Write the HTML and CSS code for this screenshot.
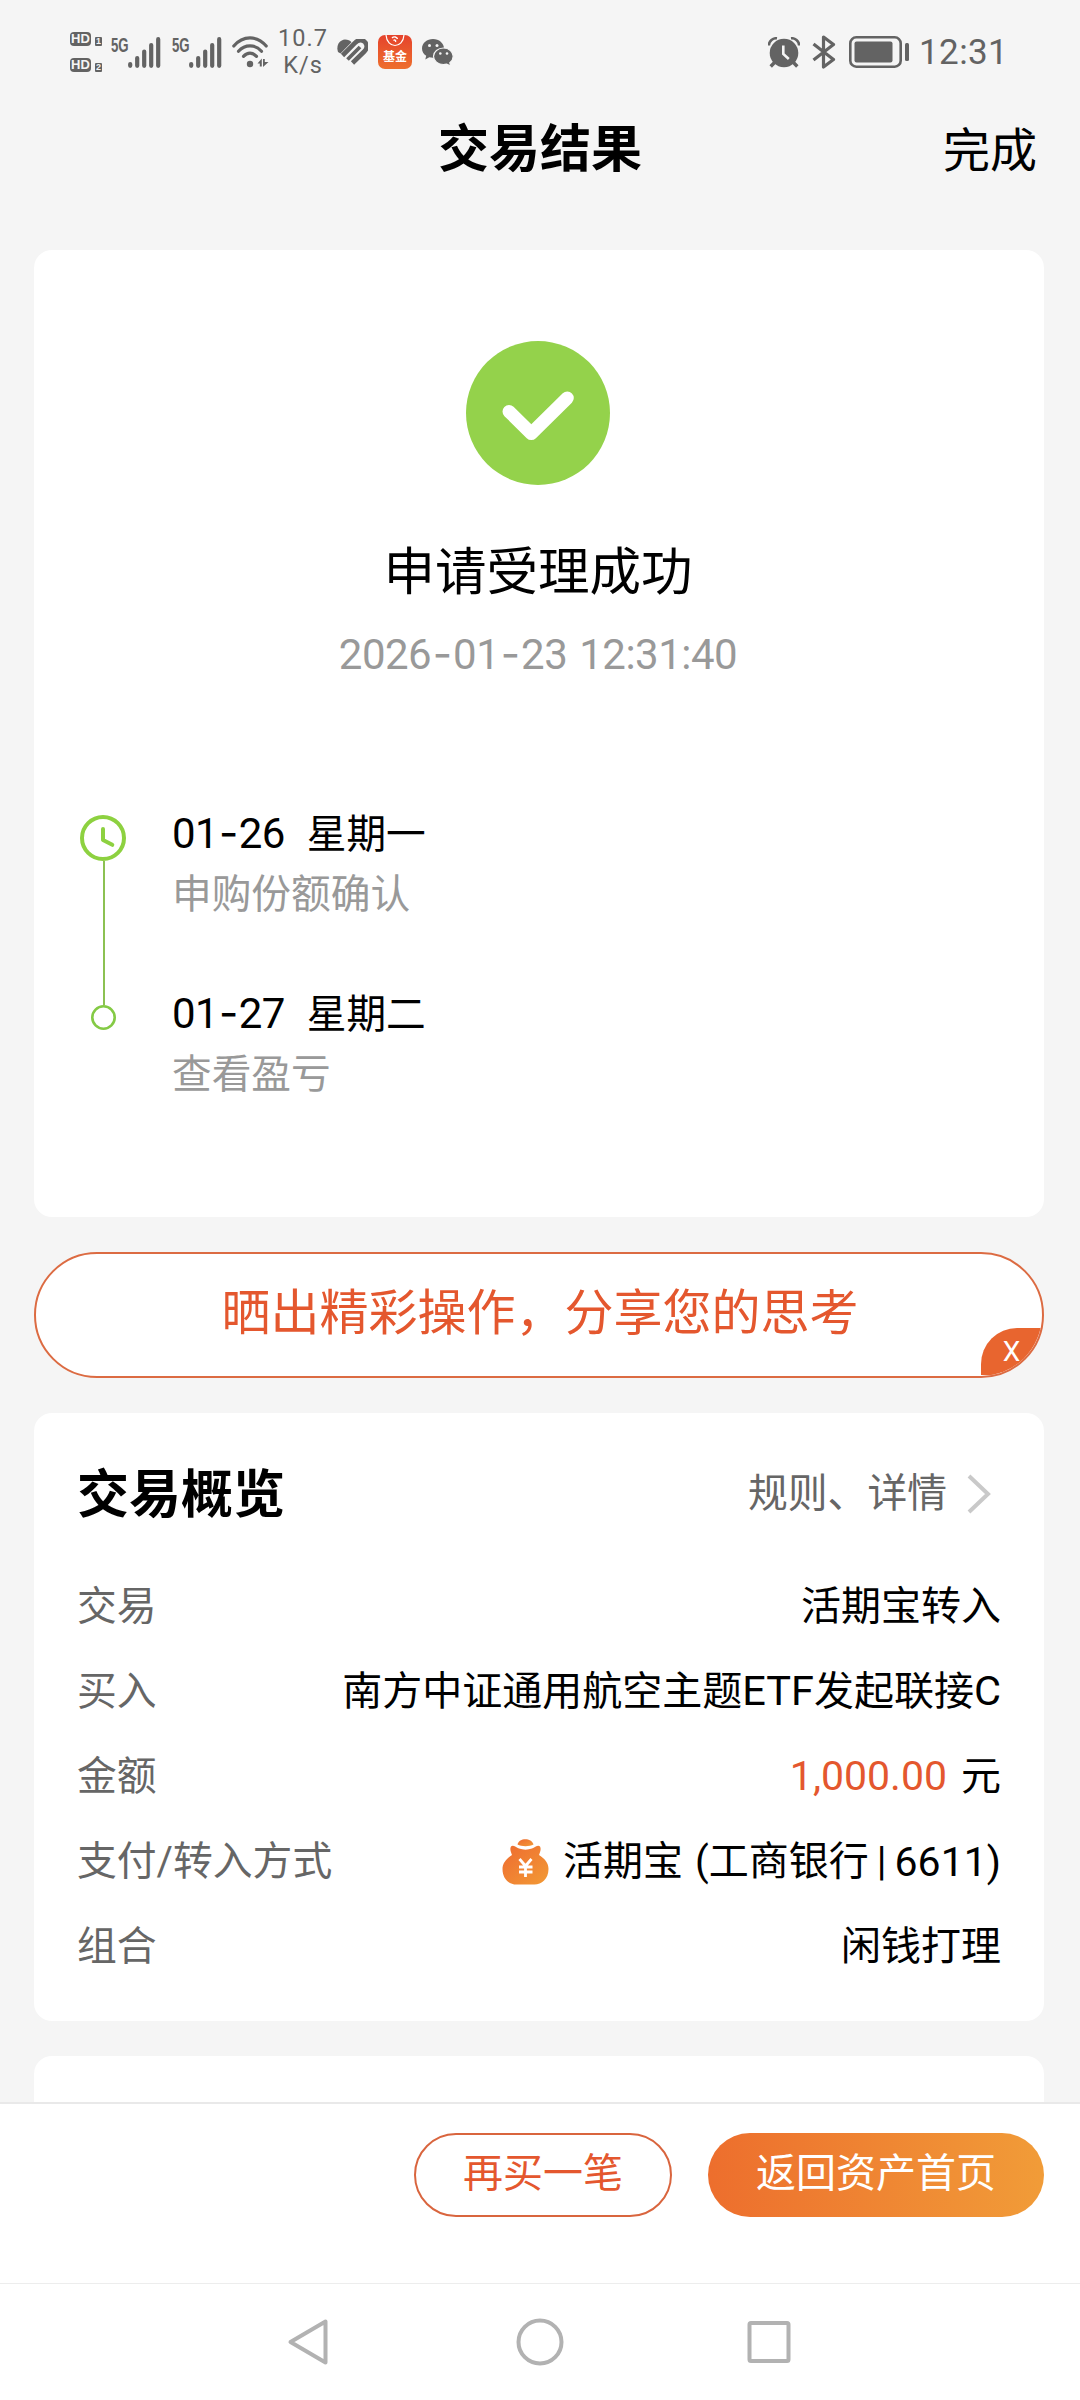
FILE: index.html
```html
<!DOCTYPE html>
<html lang="zh-CN">
<head>
<meta charset="utf-8">
<title>交易结果</title>
<link rel="stylesheet" href="styles.css">
</head>
<body>
<div class="screen">
  <div class="status">
    <div class="hd-group">
      <div class="hd-row"><span class="hd">HD</span><span class="sim">1</span></div>
      <div class="hd-row"><span class="hd">HD</span><span class="sim">2</span></div>
    </div>
    <div class="cell">
      <span class="net">5G</span>
      <svg class="bars" viewBox="0 0 33 31"><path d="M2.200 27v1.800M9.200 21v7.800M16.200 14.500v14.300M23.200 8v20.800M30.200 2.200v26.600"/></svg>
    </div>
    <div class="cell">
      <span class="net">5G</span>
      <svg class="bars" viewBox="0 0 33 31"><path d="M2.200 27v1.800M9.200 21v7.800M16.200 14.500v14.300M23.200 8v20.800M30.200 2.200v26.600"/></svg>
    </div>
    <svg class="wifi" viewBox="0 0 37 32">
      <g fill="none" stroke="#636363" stroke-width="3.200" stroke-linecap="round"><path d="M1.800 10C11-.800 25-.800 34.200 10M6.500 15.200c6.500-7.200 16.500-7.200 23 0M11.500 20.300c4-4.200 9-4.200 13 0"/></g>
      <circle cx="18" cy="28" r="3.200" fill="#636363"/>
      <path d="M25.500 27.500l4.300-5v8h-2v-3zM31 23h1.800v3h3.700L31 31z" fill="#636363"/>
    </svg>
    <div class="speed"><span>10.7</span><span>K/s</span></div>
    <svg class="health" viewBox="0 0 31 27">
      <path d="M1 13C-1 7 2 1 8 .500c3 0 5 1 6.500 2.700L3.500 14.500z" fill="#636363"/>
      <path d="M5.500 16.500L18 4c4-4.500 8.500-3 10.300-.500 2.500 3.300 1.500 6.500-1 9L15.500 24" fill="none" stroke="#636363" stroke-width="4.600"/>
      <path d="M10.500 20.500L23 8" fill="none" stroke="#636363" stroke-width="3.800"/>
    </svg>
    <div class="fund">
      <svg class="fund-mark" viewBox="0 0 34 14"><path d="M8 0c1 14 17 14 18 0" fill="none" stroke="#fff" stroke-width="1.200"/><path d="M14 3c2-2 5-1 5.500 1M15.500 5.500c1.500-1 2.500 0 2 1.500" fill="none" stroke="#fff" stroke-width="1.400"/></svg>
      <span>基金</span>
    </div>
    <svg class="wechat" viewBox="0 0 32 27">
      <path d="M11 0C5 0 0 4 0 9.500c0 3 1.700 5.700 4.200 7.300L3.300 20.500l4-2.200c1.200.300 2.400.500 3.700.500 6 0 11-4 11-9.300S17 0 11 0z" fill="#636363"/>
      <path d="M21.500 9C16 9 11.500 12.700 11.500 17.300s4.500 8.200 10 8.200c1.100 0 2.200-.200 3.200-.400l4 1.900-.900-3.300c2-1.500 3.400-3.800 3.400-6.400C31.200 12.700 27 9 21.500 9z" fill="#636363" stroke="#f5f5f5" stroke-width="1.200"/>
      <g fill="#f5f5f5"><circle cx="7.500" cy="6.500" r="1.500"/><circle cx="15" cy="6.500" r="1.500"/><circle cx="18.300" cy="14.500" r="1.300"/><circle cx="25" cy="14.500" r="1.300"/></g>
    </svg>
    <svg class="alarm" viewBox="0 0 32 31">
      <circle cx="16" cy="16" r="14.300" fill="#636363"/>
      <path d="M.800 8.500C1 4 5 .800 9 1.300M31.200 8.500C31 4 27 .800 23 1.300" fill="none" stroke="#636363" stroke-width="2.600"/>
      <path d="M7 25l-4.300 4.500M25 25l4.300 4.500" stroke="#636363" stroke-width="3.400"/>
      <path d="M15.300 8.500v8.500l5.500 5" fill="none" stroke="#f5f5f5" stroke-width="2.600"/>
    </svg>
    <svg class="bt" viewBox="0 0 24 34"><path d="M1.500 9L21.500 24.500 11.500 32V2l10 7.500L1.500 25" fill="none" stroke="#636363" stroke-width="3.200" stroke-linejoin="round"/></svg>
    <svg class="battery" viewBox="0 0 60 32">
      <rect x="1.300" y="1.300" width="50.400" height="29.400" rx="6" fill="none" stroke="#636363" stroke-width="2.600"/>
      <rect x="5.500" y="5.500" width="38" height="21" rx="2" fill="#636363"/>
      <rect x="56" y="7" width="4" height="18" rx="1.500" fill="#636363"/>
    </svg>
    <span class="clock">12:31</span>
  </div>

  <header class="header">
    <h1>交易结果</h1>
    <a class="done">完成</a>
  </header>

  <main class="content">
    <section class="card result">
      <svg class="ok" viewBox="0 0 144 144"><circle cx="72" cy="72" r="72" fill="#94d24b"/><path d="M43 70.500L65.300 92.500 101.300 57" fill="none" stroke="#fff" stroke-width="13" stroke-linecap="round" stroke-linejoin="round"/></svg>
      <h2>申请受理成功</h2>
      <p class="time">2026<i>-</i>01<i>-</i>23 12:31:40</p>
      <div class="timeline">
        <svg class="track" viewBox="0 0 46 216">
          <path d="M24 46v144" stroke="#8cc152" stroke-width="2"/>
          <circle cx="23" cy="23" r="21" fill="none" stroke="#8dd140" stroke-width="4"/>
          <path d="M23 14v11l9.300 4.800" fill="none" stroke="#8dd140" stroke-width="4" stroke-linecap="round" stroke-linejoin="round"/>
          <circle cx="23.500" cy="202.500" r="11.200" fill="none" stroke="#84ca45" stroke-width="2.600"/>
        </svg>
        <div class="steps">
          <div class="step"><p class="day"><b>01<i>-</i>26</b>星期一</p><p class="what">申购份额确认</p></div>
          <div class="step"><p class="day"><b>01<i>-</i>27</b>星期二</p><p class="what">查看盈亏</p></div>
        </div>
      </div>
    </section>

    <section class="promo">
      <span class="promo-text">晒出精彩操作，分享您的思考</span>
      <span class="close">X</span>
    </section>

    <section class="card overview">
      <div class="overview-head">
        <h3>交易概览</h3>
        <a class="more">规则、详情<svg viewBox="0 0 24 40"><path d="M2 2l19 18L2 38" fill="none" stroke="#c9c9c9" stroke-width="4"/></svg></a>
      </div>
      <div class="row"><span class="label">交易</span><span>活期宝转入</span></div>
      <div class="row"><span class="label">买入</span><span>南方中证通用航空主题<b class="latin">ETF</b>发起联接<b class="latin">C</b></span></div>
      <div class="row"><span class="label">金额</span><span><em>1,000.00</em>元</span></div>
      <div class="row"><span class="label">支付/转入方式</span><span class="pay">
        <svg class="bag" viewBox="0 0 47 46">
          <defs><linearGradient id="bag" x1="0" y1="0" x2="1" y2="1"><stop offset="0" stop-color="#ee6b30"/><stop offset="1" stop-color="#f29a35"/></linearGradient></defs>
          <path d="M15.500 5.500C17-1.500 29.500-1.500 31.500 5.500c-4 2.300-12 2.300-16 0z" fill="url(#bag)"/>
          <path d="M9 7.500c2-2 5 1 8 2 4 1.500 9 1.500 13 0 3-1 6-4 8-2 1.500 2.500 0 6-1 8.500C43 20 46.500 24 46.500 30c0 10-7 15.500-14 15.500h-18C7 45.500.500 40 .500 30c0-6 3.500-10 9.500-14-1-2.500-2.500-6-1-8.500z" fill="url(#bag)"/>
          <path d="M17.500 20l6 7 6-7M17 28h13.500M17 33h13.500M23.500 27.500V38" fill="none" stroke="#fff" stroke-width="2.800"/>
        </svg>活期宝<b class="open">(</b>工商银行<b class="tail">|</b><b class="digits">6611)</b></span></div>
      <div class="row"><span class="label">组合</span><span>闲钱打理</span></div>
    </section>

    <section class="card next"></section>
  </main>

  <footer class="actions">
    <a class="btn outline">再买一笔</a>
    <a class="btn solid">返回资产首页</a>
  </footer>

  <nav class="nav">
    <svg viewBox="0 0 48 48"><path d="M38.500 3.500v41L3.500 24z" fill="none" stroke="#b2b2b2" stroke-width="4" stroke-linejoin="round"/></svg>
    <svg viewBox="0 0 48 48"><circle cx="24" cy="24" r="21.500" fill="none" stroke="#b2b2b2" stroke-width="4"/></svg>
    <svg viewBox="0 0 48 48"><rect x="4.500" y="5" width="39" height="38" rx="1.500" fill="none" stroke="#b2b2b2" stroke-width="4"/></svg>
  </nav>
</div>
</body>
</html>
```
FILE: styles.css
```css
* { box-sizing: border-box; margin: 0; padding: 0; }
body { background: #f5f5f5; font-family: Roboto, "Noto Sans CJK SC", sans-serif; font-size: 40px; color: #000; }
svg { display: block; flex: none; }
i { font-style: normal; font-family: Inter, sans-serif; padding: 0 1px; }
b, h1, h2, h3, em { font-weight: 400; font-style: normal; }
.screen { width: 1080px; height: 2400px; overflow: hidden; display: flex; flex-direction: column; }

.status { height: 104px; flex: none; display: flex; align-items: center; padding-left: 70px; color: #636363; }
.hd-group { width: 41px; height: 40px; display: flex; flex-direction: column; justify-content: space-between; }
.hd-row { height: 14px; display: flex; align-items: flex-end; gap: 4px; }
.hd { width: 21px; height: 14px; border-radius: 4px; background: #636363; color: #f5f5f5; font: 700 13px/14px "Liberation Sans", sans-serif; text-align: center; }
.sim { width: 7px; height: 9px; border-radius: 1px; background: #636363; color: #f5f5f5; font: 700 9px/9px "Liberation Sans", sans-serif; text-align: center; }
.cell { width: 61px; height: 31px; display: flex; }
.net { width: 17px; font: 700 19.500px/16px "Liberation Sans", sans-serif; transform: scaleX(.68); transform-origin: 0 0; white-space: nowrap; }
.bars { width: 33px; height: 31px; fill: none; stroke: #636363; stroke-width: 4.200; stroke-linecap: round; }
.wifi { width: 37px; height: 32px; margin-left: -1px; }
.speed { width: 46px; margin-left: 11px; display: flex; flex-direction: column; align-items: center; font-size: 23.500px; line-height: 27px; letter-spacing: 1px; }
.health { width: 31px; height: 27px; margin-left: 11px; }
.fund { width: 34px; height: 34px; margin-left: 10px; border-radius: 7px; background: linear-gradient(#e5432c, #ee6f2d); color: #fff; overflow: hidden; }
.fund-mark { width: 34px; height: 14px; }
.fund span { display: block; font-size: 12px; font-weight: 700; line-height: 16px; text-align: center; }
.wechat { width: 32px; height: 27px; margin-left: 10px; }
.alarm { width: 32px; height: 31px; margin-left: 314px; }
.bt { width: 24px; height: 34px; margin-left: 12px; }
.battery { width: 60px; height: 32px; margin-left: 13px; }
.clock { margin: 2px 0 0 10px; font-size: 35px; line-height: 40px; letter-spacing: .4px; }

.header { height: 146px; flex: none; display: grid; grid-template-columns: 1fr auto 1fr; align-items: start; padding: 16px 43px 0; line-height: 60px; }
.header h1 { grid-column: 2; font-size: 51px; font-weight: 700; }
.done { justify-self: end; padding-top: 1px; font-size: 47px; }

.content { flex: 1; min-height: 0; overflow: hidden; padding: 0 36px 0 34px; display: flex; flex-direction: column; gap: 35px; }
.card { flex: none; background: #fff; border-radius: 18px; }
.result { height: 967px; padding: 91px 2px 0 0; display: flex; flex-direction: column; align-items: center; }
.ok { width: 144px; height: 144px; }
.result h2 { margin-top: 52px; font-size: 51.500px; line-height: 72px; }
.time { margin-top: 19px; font-size: 42px; line-height: 52px; letter-spacing: -.5px; word-spacing: 2px; color: #999; white-space: nowrap; }
.time i { padding: 0 1.500px; }
.timeline { align-self: stretch; margin-top: 134px; padding-left: 46px; display: flex; gap: 46px; }
.track { width: 46px; height: 216px; }
.steps { display: grid; grid-template-rows: 180px 180px; height: 216px; }
.step { margin-top: -12px; line-height: 60px; white-space: nowrap; font-size: 39.700px; }
.day b { font-size: 42px; letter-spacing: -.6px; margin-right: 22px; }
.what { color: #999; }

.promo { position: relative; flex: none; height: 126px; border: 2px solid #dc6b42; border-radius: 63px; background: #fff; overflow: hidden; display: flex; justify-content: center; color: #e4572e; font-size: 49px; line-height: 120px; }
.promo-text { padding-left: 2px; }
.close { position: absolute; right: 0; bottom: 1px; width: 61px; height: 47px; border-radius: 36px 0 0 0; background: #e8652f; color: #fff; font-size: 28px; line-height: 47px; text-align: center; }

.overview { height: 608px; padding: 35px 43px 0 44px; }
.overview-head { height: 84px; margin-bottom: 32px; display: flex; justify-content: space-between; align-items: center; }
.overview-head h3 { margin-left: -1px; font-size: 52px; font-weight: 700; }
.more { display: flex; align-items: center; gap: 20px; margin: 8px 10px 0 0; line-height: 56px; font-size: 39.800px; color: #666; }
.more svg { width: 24px; height: 40px; }
.row { height: 85px; display: flex; justify-content: space-between; align-items: center; line-height: 60px; white-space: nowrap; }
.label { margin-left: -1px; font-size: 39.800px; color: #666; }
.row em { color: #e4572e; font-size: 41px; margin-right: 14px; }
.latin { font-size: 41.500px; }
.digits { font-size: 41px; }
.pay { display: flex; align-items: center; }
.bag { width: 47px; height: 46px; margin-right: 14px; }
.open { margin-left: 12px; }
.tail { margin: 0 8px; }
.next { height: 120px; }

.actions { height: 181px; flex: none; border-top: 2px solid #e9e9e9; background: #fff; display: flex; justify-content: flex-end; gap: 36px; padding: 29px 36px 0; }
.btn { height: 84px; border-radius: 42px; text-align: center; line-height: 81px; }
.outline { width: 258px; border: 2px solid #d9653e; color: #e4572e; line-height: 77px; }
.solid { width: 336px; background: linear-gradient(90deg, #ed6e2d, #f19c38); color: #fff; }
.nav { height: 117px; flex: none; border-top: 1px solid #ededed; background: #fff; display: flex; justify-content: center; align-items: flex-start; gap: 181px; padding-top: 34px; }
.nav svg { width: 48px; height: 48px; }
```
